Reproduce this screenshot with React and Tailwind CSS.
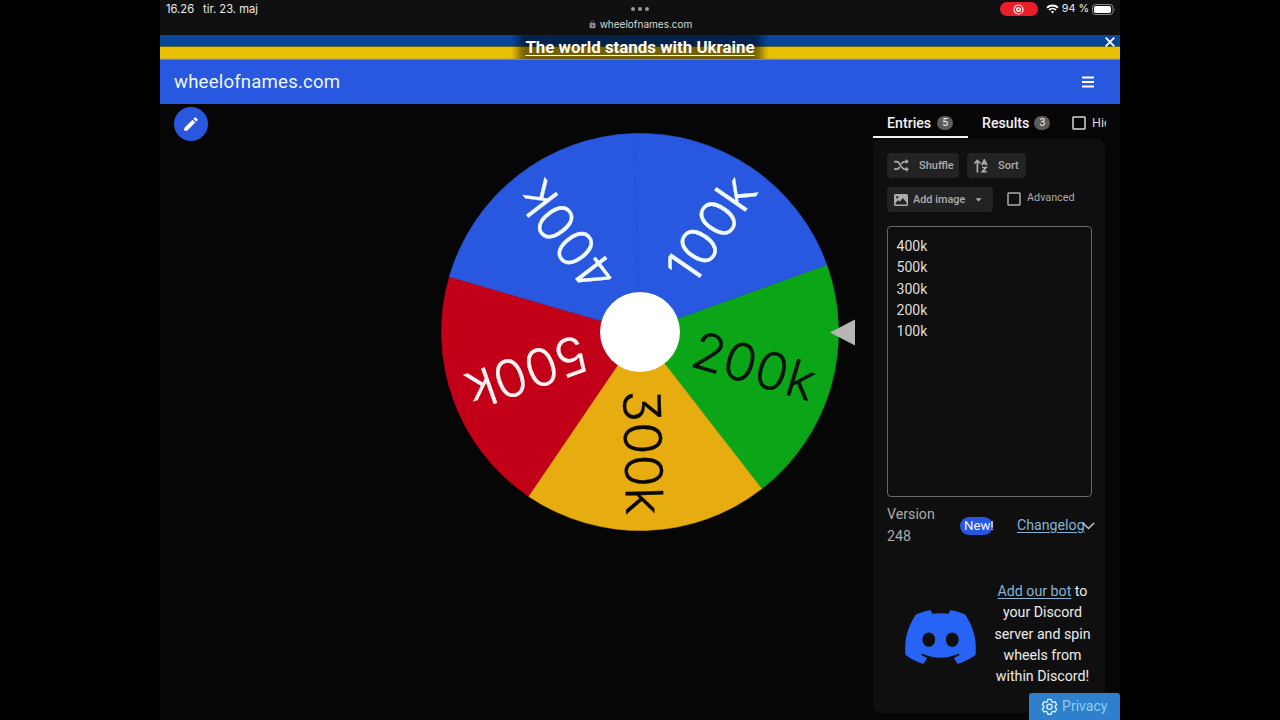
import React from "react";
import { MdEdit, MdArrowDropDown, MdCheckBoxOutlineBlank, MdLock } from "react-icons/md";
import { FaDiscord } from "react-icons/fa";

const CX = 200;
const CY = 200;
const R = 198.5;
const START = -19.8;

const SLICES = [
  { label: "200k", fill: "#0aa617", ink: "#07130a", x: 56, length: 126 },
  { label: "300k", fill: "#e6ac10", ink: "#0b0802", x: 58, length: 125 },
  { label: "500k", fill: "#c20017", ink: "#fff3f3", x: 57, length: 125 },
  { label: "400k", fill: "#2857e0", ink: "#f1fbff", x: 57, length: 125 },
  { label: "100k", fill: "#2857e0", ink: "#f1fbff", x: 66, length: 117 },
];

function point(deg) {
  const a = (deg * Math.PI) / 180;
  return `${CX + R * Math.cos(a)} ${CY + R * Math.sin(a)}`;
}

function Wheel() {
  return (
    <svg width="418" height="400" viewBox="0 0 418 400" className="block shrink-0">
      {SLICES.map((s, i) => {
        const a = START + i * 72;
        return (
          <path
            key={s.label}
            d={`M${CX} ${CY} L${point(a)} A${R} ${R} 0 0 1 ${point(a + 72)} Z`}
            fill={s.fill}
            stroke={s.fill}
            strokeWidth=".6"
          />
        );
      })}
      {SLICES.map((s, i) => (
        <text
          key={s.label}
          transform={`translate(${CX} ${CY}) rotate(${START + 36.3 + i * 72})`}
          x={s.x}
          y="18.5"
          textLength={s.length}
          lengthAdjust="spacingAndGlyphs"
          fill={s.ink}
          stroke={s.ink}
          strokeWidth=".3"
          strokeLinejoin="round"
          className="font-['Inter',sans-serif] text-[51.5px] font-light [font-feature-settings:'cv09']"
        >
          {s.label}
        </text>
      ))}
      <circle cx={CX} cy={CY} r="40" fill="#fff" />
      <path d="M390 200.500 L415 187.500 V213.500 Z" fill="#b5b5b5" />
    </svg>
  );
}

function StatusBar() {
  return (
    <div className="grid h-[35px] shrink-0 grid-cols-3 bg-[#101010] text-[#ececec]">
      <div className="flex h-[19px] items-center gap-[10px] pl-[6px] font-['Inter',sans-serif] text-[11.2px]">
        <span>16.26</span>
        <span className="-ml-px">tir. 23. maj</span>
      </div>
      <div className="flex flex-col items-center">
        <div className="flex h-[18px] items-center gap-[3px]">
          <i className="size-1 rounded-full bg-[#9a9a9a]" />
          <i className="size-1 rounded-full bg-[#9a9a9a]" />
          <i className="size-1 rounded-full bg-[#9a9a9a]" />
        </div>
        <div className="flex h-[13px] items-center gap-[3px] font-['Inter',sans-serif] text-[10px] leading-[13px] text-[#d8d8d8]">
          <MdLock className="size-[9px] text-[#8a8a8a]" />
          <span>wheelofnames.com</span>
        </div>
      </div>
      <div className="flex h-[18px] items-center justify-end pr-[4px] font-['Inter',sans-serif] text-[10.8px]">
        <span className="mr-[8px] flex h-[14px] w-[38px] items-center justify-center rounded-full bg-[#e81e2a]">
          <svg width="11" height="11" viewBox="0 0 11 11">
            <circle cx="5.5" cy="5.5" r="4.5" fill="none" stroke="#fff" strokeWidth="1.2" />
            <circle cx="5.5" cy="5.5" r="1.8" fill="none" stroke="#fff" strokeWidth="1.4" />
          </svg>
        </span>
        <svg width="13" height="10" viewBox="0 0 13 10" fill="none" stroke="#fff" strokeWidth="1.9">
          <path d="M1 3.7 A8 8 0 0 1 12 3.7" />
          <path d="M3.1 6 A4.9 4.9 0 0 1 9.9 6" />
          <path d="M6.5 9.4 L4.8 7.7 A2.5 2.5 0 0 1 8.2 7.7 Z" fill="#fff" stroke="none" />
        </svg>
        <span className="ml-[3px]">94 %</span>
        <svg width="24" height="11" viewBox="0 0 24 11" className="ml-[3px]">
          <rect x=".5" y=".5" width="20.5" height="10" rx="3" fill="none" stroke="#8b8b8b" />
          <rect x="2" y="2" width="17" height="7" rx="1.8" fill="#fff" />
          <path d="M22.3 3.7 Q23.6 5.5 22.3 7.3 Z" fill="#8b8b8b" />
        </svg>
      </div>
    </div>
  );
}

function Checkbox({ label, className }) {
  return (
    <span className={`flex items-center ${className}`}>
      <MdCheckBoxOutlineBlank className="size-[18px] shrink-0" />
      <span>{label}</span>
    </span>
  );
}

function ShuffleIcon() {
  return (
    <svg width="15" height="13" viewBox="0 0 15 13" fill="none" stroke="currentColor" strokeWidth="1.7">
      <path d="M0 2.6 H2.8 C6 2.6 7.2 10.2 10.6 10.2 H12.5" />
      <path d="M0 10.2 H2.8 C4.2 10.2 5 9.2 5.7 8 M7.4 4.9 C8.2 3.5 9 2.6 10.6 2.6 H12.5" />
      <path d="M11.8 0 L14.9 2.6 L11.8 5.3 Z M11.8 7.5 L14.9 10.2 L11.8 12.9 Z" fill="currentColor" stroke="none" />
    </svg>
  );
}

function SortIcon() {
  return (
    <svg width="14" height="14" viewBox="0 0 14 14" fill="none" stroke="currentColor" strokeWidth="1.7">
      <path d="M3.4 13.5 V1.5 M.5 4.4 L3.4 1.5 L6.3 4.4" />
      <path d="M7.7 6.1 L10.3 1 L12.9 6.1 M8.6 4.6 H12" />
      <path d="M8 8.5 H12.2 L8.3 12.7 H12.8" />
    </svg>
  );
}

function ImageIcon() {
  return (
    <svg width="14" height="12" viewBox="0 0 14 12">
      <path
        fillRule="evenodd"
        fill="currentColor"
        d="M1.5 0 H12.5 A1.5 1.5 0 0 1 14 1.5 V10.5 A1.5 1.5 0 0 1 12.5 12 H1.5 A1.5 1.5 0 0 1 0 10.5 V1.5 A1.5 1.5 0 0 1 1.5 0 Z M1.6 10.4 H12.5 V8.6 L8.9 4 L5.9 7.8 L4.2 6.3 L1.6 9 Z M3.3 2 A1.2 1.2 0 1 0 3.31 2 Z"
      />
    </svg>
  );
}

function Sidebar() {
  return (
    <aside className="flex w-[233px] shrink-0 flex-col">
      <div className="flex h-[35px] shrink-0 overflow-hidden text-[14.2px] font-medium text-[#f2f2f2]">
        <div className="flex h-[34px] w-[95px] shrink-0 items-center border-b-2 border-[#f4f4f4] pt-[7px] pl-[14px]">
          <span>Entries</span>
          <span className="mb-px ml-1.5 flex h-[14px] w-[16px] shrink-0 items-center justify-center rounded-full bg-[#5c5c5c] text-[10.5px] font-normal">5</span>
        </div>
        <div className="flex h-[34px] w-[101px] shrink-0 items-center pt-[5px] pl-[14px]">
          <span>Results</span>
          <span className="mb-px ml-[5px] flex h-[14px] w-[16px] shrink-0 items-center justify-center rounded-full bg-[#5c5c5c] text-[10.5px] font-normal">3</span>
        </div>
        <Checkbox label="Hide" className="h-[34px] shrink-0 gap-[4px] pt-[4px] pl-px text-[12.6px] font-normal text-[#d8d8d8]" />
      </div>
      <div className="flex h-[574px] w-[232px] flex-col rounded-lg bg-[#0f0f0f] px-[14px] pt-[14px]">
        <div className="flex gap-2 text-[11px] text-[#acacac]">
          <button className="flex h-[25px] w-[72px] items-center gap-[10px] rounded-[4px] bg-[#232323] pl-[7px] font-medium">
            <ShuffleIcon />
            <span className="pt-px">Shuffle</span>
          </button>
          <button className="flex h-[25px] w-[59px] items-center gap-[10px] rounded-[4px] bg-[#232323] pl-[7px] font-medium">
            <SortIcon />
            <span className="pt-px">Sort</span>
          </button>
        </div>
        <div className="mt-[8px] flex items-center text-[11px] text-[#acacac]">
          <button className="mt-px flex h-[25px] w-[106px] items-center rounded-[4px] bg-[#232323] pl-[7px] font-medium">
            <ImageIcon />
            <span className="ml-[5px] pt-px text-[10.9px]">Add image</span>
            <MdArrowDropDown className="ml-[6px] size-[15px]" />
          </button>
          <Checkbox label="Advanced" className="mb-px ml-3 gap-[4px] text-[10.8px]" />
        </div>
        <div className="mt-[14px] h-[271px] w-[205px] shrink-0 rounded-[4px] border border-[#686868] px-[8.5px] pt-[9px] text-[14.1px] leading-[21.35px] text-[#dedede]">
          {["400k", "500k", "300k", "200k", "100k"].map((e) => (
            <div key={e}>{e}</div>
          ))}
        </div>
        <div className="mt-[7px] flex h-[43px] items-center text-[14.2px] leading-[21.35px]">
          <div className="w-[73px] shrink-0 text-[#ababab]">Version 248</div>
          <span className="flex h-[18px] w-[33px] shrink-0 items-center rounded-full bg-[#2857e0] pl-[4px] text-[13.2px] text-[#f1f8ff]">New!</span>
          <span className="ml-6 text-[#84b3d6] underline underline-offset-2">Changelog</span>
          <svg width="13" height="8" viewBox="0 0 13 8" className="-ml-[3px] shrink-0" fill="none" stroke="#c4c4c4" strokeWidth="1.6">
            <path d="M.9 1 L6.5 6.5 L12.1 1" />
          </svg>
        </div>
        <div className="mt-[34px] flex items-center">
          <div className="flex w-[107px] shrink-0 justify-center pt-[6px]">
            <FaDiscord className="h-[62px] w-[77px] text-[#2763f4]" />
          </div>
          <p className="w-[97px] shrink-0 text-center text-[14.2px] leading-[21.35px] whitespace-nowrap text-[#ececec]">
            <span className="text-[#84b3d6] underline underline-offset-2">Add our bot</span> to
            <br />
            your Discord
            <br />
            server and spin
            <br />
            wheels from
            <br />
            within Discord!
          </p>
        </div>
      </div>
    </aside>
  );
}

export default function App() {
  return (
    <div className="flex h-[720px] w-[1280px] justify-center overflow-hidden bg-black font-['Roboto',sans-serif]">
      <div className="relative flex h-[720px] w-[960px] flex-col overflow-hidden bg-[#060606]">
        <StatusBar />
        <div className="flex h-[25px] shrink-0 items-start justify-between bg-[linear-gradient(#07469a_0px,#07469a_11px,#5c661f_11px,#5c661f_12px,#e9c106_12px,#e9c106_23px,#a9a866_24px,#3f68c8_25px)]">
          <span className="w-[22px]" />
          <div className="flex h-[24px] items-center bg-black/50 pt-px text-[16.9px] font-bold text-[#fffdf5] underline underline-offset-2 shadow-[0_0_8px_7px_rgba(0,0,0,0.5)] [clip-path:inset(0_-14px)]">
            The world stands with Ukraine
          </div>
          <span className="flex h-[13px] w-[22px] items-center pl-[7px]">
            <svg width="10" height="10" viewBox="0 0 11 11" stroke="#fff" strokeWidth="2">
              <path d="M.8 .8 L10.2 10.2 M10.2 .8 L.8 10.2" />
            </svg>
          </span>
        </div>
        <header className="flex h-[44px] shrink-0 items-center justify-between bg-[#2857e0] pr-[26px] pl-[14px] text-[#eff8ff]">
          <h1 className="pt-px text-[18.6px] tracking-[0.19px]">wheelofnames.com</h1>
          <svg width="12" height="12" viewBox="0 0 12 12" stroke="#fff" strokeWidth="1.8">
            <path d="M0 1.5 H12 M0 6 H12 M0 10.5 H12" />
          </svg>
        </header>
        <main className="flex grow pl-[14px]">
          <button className="mt-[3px] flex size-[34px] shrink-0 items-center justify-center rounded-full bg-[#2857e0] text-white">
            <MdEdit className="size-[18px]" />
          </button>
          <div className="w-[665px] shrink-0 pt-[28px] pl-[232px]">
            <Wheel />
          </div>
          <Sidebar />
        </main>
        <div className="absolute right-0 bottom-0 flex h-[27px] w-[91px] items-center gap-1 rounded-t-[3px] bg-[#2e80cc] pl-3 text-[14.1px] text-[#8ccdf5]">
          <svg width="17" height="17" viewBox="0 0 24 24" fill="none" stroke="#d9effc" strokeWidth="1.9" strokeLinejoin="round">
            <path d="M9.6 2h4.8l.7 3.1 1.7 1 3-.9 2.4 4.1-2.3 2.2v1.9l2.3 2.2-2.4 4.1-3-.9-1.7 1-.7 3.1H9.6l-.7-3.1-1.7-1-3 .9-2.4-4.1 2.3-2.2v-1.9L1.8 9.3l2.4-4.1 3 .9 1.7-1z" />
            <circle cx="12" cy="12.4" r="3.6" />
          </svg>
          <span>Privacy</span>
        </div>
      </div>
    </div>
  );
}
